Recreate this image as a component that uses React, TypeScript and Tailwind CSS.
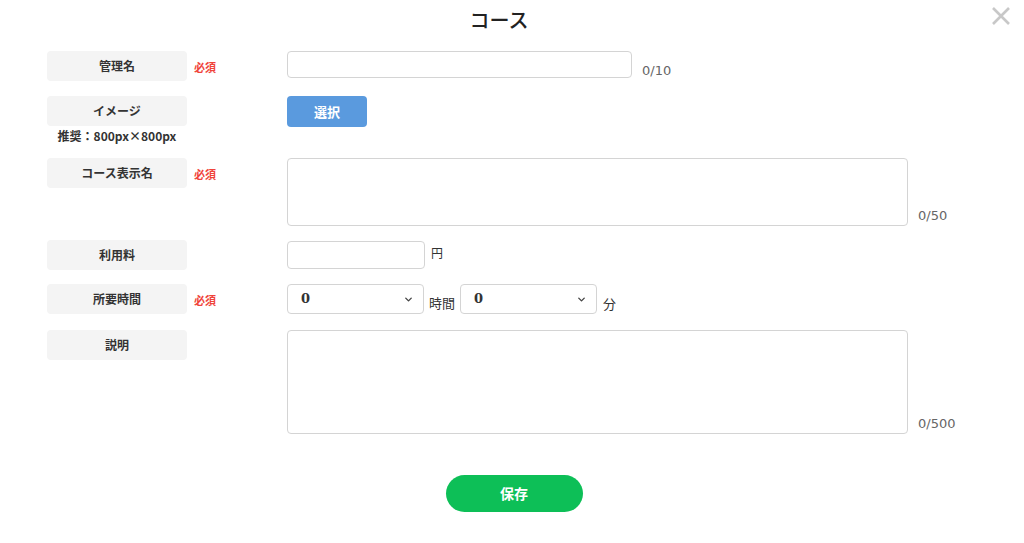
import React from "react";
import { ChevronDown } from "lucide-react";

const font = { fontFamily: '"Noto Sans CJK JP", "Noto Sans", sans-serif' };

function Label({ text, required }: { text: string; required?: boolean }) {
  return (
    <div className="flex items-start">
      <div className="w-[140px] h-[30px] bg-[#f4f4f4] rounded-[4px] flex items-center justify-center text-[12px] font-semibold text-[#333]">
        {text}
      </div>
      {required && <span className="ml-[7px] mt-[11px] text-[11px] font-bold text-[#f0443a] leading-none">必須</span>}
    </div>
  );
}

function Counter({ text }: { text: string }) {
  return <span className="ml-[10px] text-[13px] text-[#666] leading-none mb-[4px]" style={{ fontFamily: '"DejaVu Sans", sans-serif' }}>{text}</span>;
}

function Select() {
  return (
    <div className="w-[137px] h-[30px] border border-[#d4d4d4] rounded-[4px] flex items-center justify-between pl-[13px] pr-[9px]">
      <span className="text-[13px] font-bold text-[#333]" style={{ fontFamily: '"DejaVu Serif", serif' }}>0</span>
      <ChevronDown size={11} strokeWidth={3} className="text-[#444]" />
    </div>
  );
}

export default function App() {
  return (
    <div className="w-[1024px] h-[543px] bg-white relative text-[#333]" style={font}>
      {/* Header */}
      <div className="h-[40px] flex items-center justify-center pr-[26px]">
        <h1 className="text-[20px] font-medium text-[#222]">コース</h1>
      </div>
      <button className="absolute right-[13px] top-[6px] text-[#c8c8c8]">
        <svg width="20" height="20" viewBox="0 0 20 20" stroke="currentColor" strokeWidth="2.6" fill="none">
          <path d="M2 2 L18 18 M18 2 L2 18" />
        </svg>
      </button>

      <div className="pl-[47px] pt-[11px] flex flex-col">
        {/* 管理名 */}
        <div className="flex">
          <div className="w-[240px]"><Label text="管理名" required /></div>
          <div className="flex items-end h-[30px]">
            <div className="w-[345px] h-[27px] border border-[#d4d4d4] rounded-[4px] self-start" />
            <Counter text="0/10" />
          </div>
        </div>

        {/* イメージ */}
        <div className="flex mt-[15px]">
          <div className="w-[240px] flex flex-col">
            <Label text="イメージ" />
            <span className="w-[140px] text-center text-[12px] font-semibold text-[#333] mt-[1px]">推奨：800px×800px</span>
          </div>
          <button className="w-[80px] h-[31px] bg-[#5a9ade] rounded-[4px] text-white text-[13px] font-bold">選択</button>
        </div>

        {/* コース表示名 */}
        <div className="flex mt-[13px]">
          <div className="w-[240px]"><Label text="コース表示名" required /></div>
          <div className="flex items-end">
            <div className="w-[621px] h-[68px] border border-[#d4d4d4] rounded-[4px]" />
            <Counter text="0/50" />
          </div>
        </div>

        {/* 利用料 */}
        <div className="flex mt-[14px]">
          <div className="w-[240px]"><Label text="利用料" /></div>
          <div className="flex items-center">
            <div className="w-[138px] h-[28px] border border-[#d4d4d4] rounded-[4px]" />
            <span className="ml-[6px] text-[12px] text-[#333] mb-[4px]">円</span>
          </div>
        </div>

        {/* 所要時間 */}
        <div className="flex mt-[14px]">
          <div className="w-[240px]"><Label text="所要時間" required /></div>
          <div className="flex items-end">
            <Select />
            <span className="mx-[5px] text-[13px] text-[#333] mb-[2px]">時間</span>
            <Select />
            <span className="ml-[6px] text-[13px] text-[#333] mb-[1px]">分</span>
          </div>
        </div>

        {/* 説明 */}
        <div className="flex mt-[16px]">
          <div className="w-[240px]"><Label text="説明" /></div>
          <div className="flex items-end">
            <div className="w-[621px] h-[104px] border border-[#d4d4d4] rounded-[4px]" />
            <Counter text="0/500" />
          </div>
        </div>

        {/* 保存 */}
        <div className="flex justify-center mt-[41px] pr-[43px]">
          <button className="w-[137px] h-[37px] rounded-full bg-[#0dbf57] text-white text-[14px] font-bold">保存</button>
        </div>
      </div>
    </div>
  );
}
